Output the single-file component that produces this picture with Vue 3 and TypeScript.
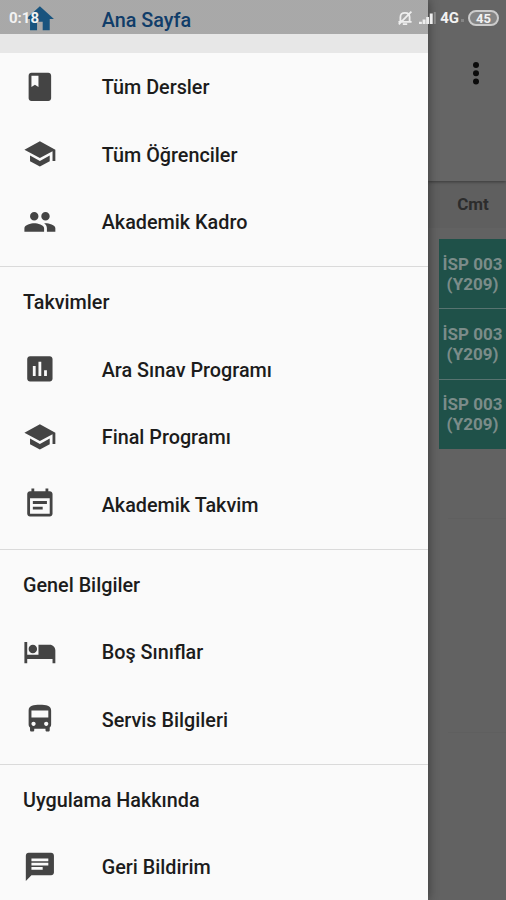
<script setup lang="ts">
interface Item {
  label: string
  icon: string
  active?: boolean
}
interface Group {
  title?: string
  items: Item[]
}

const cap = 'M5 13.18v4L12 21l7-3.82v-4L12 17l-7-3.82zM12 3L1 9l11 6 9-4.91V17h2V9L12 3z'

const groups: Group[] = [
  {
    items: [
      { label: 'Ana Sayfa', icon: 'M10 20v-6h4v6h5v-8h3L12 3 2 12h3v8z', active: true },
      { label: 'Tüm Dersler', icon: 'M18 2H6c-1.1 0-2 .9-2 2v16c0 1.1.9 2 2 2h12c1.1 0 2-.9 2-2V4c0-1.1-.9-2-2-2zM6 4h5v8l-2.5-1.5L6 12V4z' },
      { label: 'Tüm Öğrenciler', icon: cap },
      { label: 'Akademik Kadro', icon: 'M16 11c1.66 0 2.99-1.34 2.99-3S17.66 5 16 5s-3 1.34-3 3 1.34 3 3 3zm-8 0c1.66 0 2.99-1.34 2.99-3S9.66 5 8 5 5 6.34 5 8s1.34 3 3 3zm0 2c-2.33 0-7 1.17-7 3.5V19h14v-2.5c0-2.33-4.67-3.5-7-3.5zm8 0c-.29 0-.62.02-.97.05 1.16.84 1.97 1.97 1.97 3.45V19h6v-2.5c0-2.33-4.67-3.5-7-3.5z' },
    ],
  },
  {
    title: 'Takvimler',
    items: [
      { label: 'Ara Sınav Programı', icon: 'M19 3H5c-1.1 0-2 .9-2 2v14c0 1.1.9 2 2 2h14c1.1 0 2-.9 2-2V5c0-1.1-.9-2-2-2zM9 17H7v-7h2v7zm4 0h-2V7h2v10zm4 0h-2v-4h2v4z' },
      { label: 'Final Programı', icon: cap },
      { label: 'Akademik Takvim', icon: 'M17 10H7v2h10v-2zm2-7h-1V1h-2v2H8V1H6v2H5c-1.11 0-1.99.9-1.99 2L3 19c0 1.1.89 2 2 2h14c1.1 0 2-.9 2-2V5c0-1.1-.9-2-2-2zm0 16H5V8h14v11zm-5-5H7v2h7v-2z' },
    ],
  },
  {
    title: 'Genel Bilgiler',
    items: [
      { label: 'Boş Sınıflar', icon: 'M7 13c1.66 0 3-1.34 3-3S8.66 7 7 7s-3 1.34-3 3 1.34 3 3 3zm12-6h-8v7H3V5H1v15h2v-3h18v3h2v-9c0-2.21-1.79-4-4-4z' },
      { label: 'Servis Bilgileri', icon: 'M4 16c0 .88.39 1.67 1 2.22V20c0 .55.45 1 1 1h1c.55 0 1-.45 1-1v-1h8v1c0 .55.45 1 1 1h1c.55 0 1-.45 1-1v-1.78c.61-.55 1-1.34 1-2.22V6c0-3.5-3.58-4-8-4s-8 .5-8 4v10zm3.5 1c-.83 0-1.5-.67-1.5-1.5S6.67 14 7.5 14s1.5.67 1.5 1.5S8.33 17 7.5 17zm9 0c-.83 0-1.5-.67-1.5-1.5s.67-1.5 1.5-1.5 1.5.67 1.5 1.5-.67 1.5-1.5 1.5zm1.5-6H6V6h12v5z' },
    ],
  },
  {
    title: 'Uygulama Hakkında',
    items: [
      { label: 'Geri Bildirim', icon: 'M20 2H4c-1.1 0-1.99.9-1.99 2L2 22l4-4h14c1.1 0 2-.9 2-2V4c0-1.1-.9-2-2-2zM6 9h12v2H6V9zm8 5H6v-2h8v2zm4-6H6V6h12v2z' },
    ],
  },
]

const lessons = [1, 2, 3]
</script>

<template>
  <div class="screen">
    <nav class="drawer">
      <section v-for="(g, i) in groups" :key="i" class="group">
        <h2 v-if="g.title" class="title">{{ g.title }}</h2>
        <a v-for="item in g.items" :key="item.label" class="row" :class="{ active: item.active }">
          <svg class="icon" viewBox="0 0 24 24"><path :d="item.icon" /></svg>
          <span>{{ item.label }}</span>
        </a>
      </section>
    </nav>

    <main class="page">
      <header class="toolbar">
        <svg class="more" viewBox="0 0 8 24">
          <circle cx="4" cy="4" r="3" />
          <circle cx="4" cy="12.3" r="3" />
          <circle cx="4" cy="20.6" r="3" />
        </svg>
      </header>
      <div class="day">Cmt</div>
      <div class="lessons">
        <div v-for="n in lessons" :key="n" class="lesson">
          <span>İSP 003</span>
          <span>(Y209)</span>
        </div>
      </div>
      <div class="lines"><i></i><i></i><i></i></div>
    </main>

    <div class="status">
      <span class="time">0:18</span>
      <svg class="bell" viewBox="0 0 16 16">
        <path d="M3.4 11.4V7.2C3.4 4.4 5 2.8 8 2.8s4.6 1.6 4.6 4.4v4.2M1.4 11.9h13.2M5.8 14.2h4.4M14.4 1.6L1.8 14.4" />
      </svg>
      <svg class="signal" viewBox="0 0 18 12">
        <path d="M0 9.8h2.9V12H0zM3.6 7.6h2.9V12H3.6zM7.2 5h2.9v7H7.2zM10.8 1.5h2.9V12h-2.9z" />
        <path class="faint" d="M14.8 0h2v12h-2z" />
      </svg>
      <span class="net">4G</span>
      <i class="dot"></i>
      <span class="battery">45</span>
    </div>
  </div>
</template>

<style>
body {
  margin: 0;
  overflow: hidden;
}
</style>

<style scoped>
.screen {
  position: relative;
  display: flex;
  width: 506px;
  height: 900px;
  overflow: hidden;
  background: #626262;
  font-family: Roboto, 'Liberation Sans', sans-serif;
}
.drawer {
  position: relative;
  z-index: 2;
  flex: none;
  box-sizing: border-box;
  width: 428px;
  height: 900px;
  overflow: hidden;
  background: #fafafa;
  box-shadow: 0 0 10px rgba(0, 0, 0, 0.45);
}
.group:first-child {
  margin-top: -14.25px;
}
.group + .group {
  margin-top: 10.5px;
  border-top: 1px solid #dadada;
  padding-top: 1px;
}
.title,
.row {
  display: flex;
  align-items: center;
  box-sizing: border-box;
  height: 67.5px;
  margin: 0;
  padding: 0 23px;
  color: #1c1c1c;
  font-size: 19.8px;
  font-weight: 500;
  white-space: nowrap;
}
.title,
.row span {
  padding-top: 1px;
}
.row {
  gap: 45px;
}
.icon {
  flex: none;
  width: 33.75px;
  height: 33.75px;
  margin-bottom: 1px;
  fill: #444;
}
.active {
  background: #e7e7e7;
  color: #165390;
}
.active .icon {
  fill: #2273ad;
}
.page {
  flex: 1;
  min-width: 0;
}
.toolbar {
  position: relative;
  z-index: 1;
  display: flex;
  justify-content: flex-end;
  box-sizing: border-box;
  height: 181px;
  padding: 61px 26px 0 0;
  background: #656565;
  box-shadow: 0 1px 3px rgba(0, 0, 0, 0.4);
}
.more {
  width: 8px;
  height: 24px;
  fill: #0b0b0b;
}
.day {
  height: 47px;
  padding-left: 12px;
  background: #5f5f5f;
  color: #2c2c2c;
  font-size: 17px;
  font-weight: 700;
  line-height: 47px;
  text-align: center;
}
.lessons {
  display: grid;
  gap: 1px;
  margin: 11px 0 0 11px;
  background: #587370;
}
.lesson {
  display: flex;
  flex-direction: column;
  align-items: center;
  justify-content: center;
  height: 69.3px;
  background: #1f5149;
  color: #7b8c89;
  font-size: 17px;
  font-weight: 700;
  line-height: 20px;
  white-space: nowrap;
}
.lines {
  display: grid;
  row-gap: 213px;
  margin: 69px 0 0 20px;
}
.lines i {
  height: 1px;
  background: #5f5f5f;
}
.status {
  position: absolute;
  z-index: 3;
  inset: 0 0 auto 0;
  display: flex;
  align-items: center;
  box-sizing: border-box;
  height: 34px;
  padding: 1px 7px 0 9px;
  background: linear-gradient(90deg, rgba(0, 0, 0, 0.27) 428px, transparent 428px);
  color: #f2f2f2;
  font-size: 15px;
  font-weight: 700;
}
.time {
  flex: 1;
}
.bell {
  width: 16px;
  height: 16px;
  margin-right: 6px;
  fill: none;
  stroke: #eee;
  stroke-width: 1.8;
}
.signal {
  width: 18px;
  height: 12px;
  margin-right: 3px;
  fill: #eee;
}
.faint {
  opacity: 0.3;
}
.dot {
  width: 3px;
  height: 3px;
  margin: 5px 4px 0 2px;
  background: #858585;
}
.battery {
  box-sizing: border-box;
  width: 31px;
  height: 16px;
  border: 2px solid #ccc;
  border-radius: 8px;
  background: #858585;
  font-size: 13px;
  line-height: 13px;
  text-align: center;
}
</style>
